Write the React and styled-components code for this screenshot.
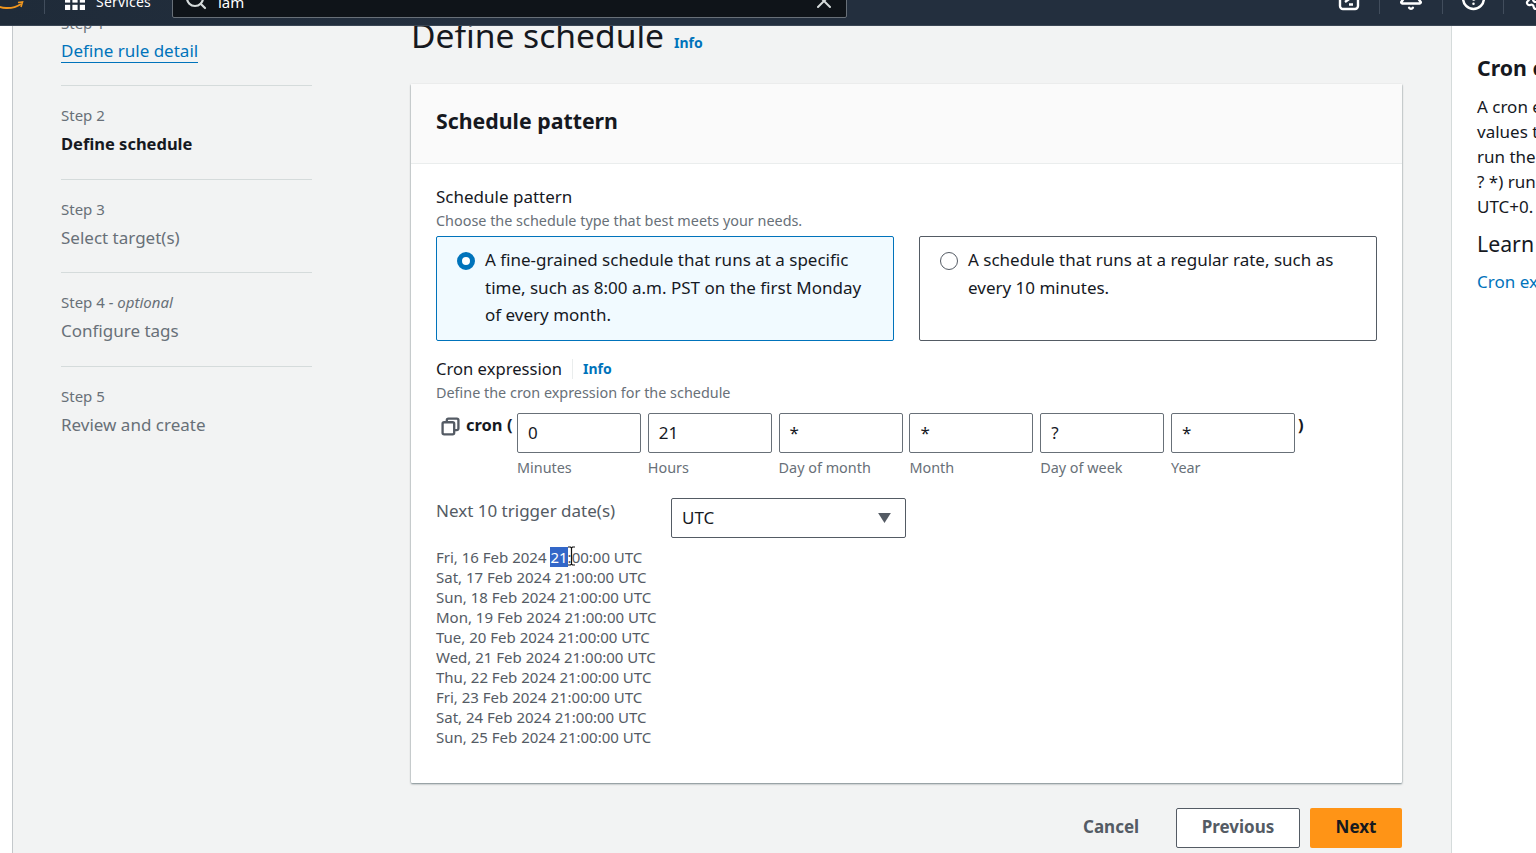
import React from "react";
import styled, { createGlobalStyle } from "styled-components";
import { Search, X, Bell, CircleHelp, Settings } from "lucide-react";

const GlobalStyle = createGlobalStyle`
  html, body {
    margin: 0;
    padding: 0;
    overflow: hidden;
    background: #fff;
    font-family: "Noto Sans", "Open Sans", sans-serif;
  }
`;

const fields = [
  { value: "0", label: "Minutes" },
  { value: "21", label: "Hours" },
  { value: "*", label: "Day of month" },
  { value: "*", label: "Month" },
  { value: "?", label: "Day of week" },
  { value: "*", label: "Year" },
];

const dates = [
  "Sat, 17 Feb 2024 21:00:00 UTC",
  "Sun, 18 Feb 2024 21:00:00 UTC",
  "Mon, 19 Feb 2024 21:00:00 UTC",
  "Tue, 20 Feb 2024 21:00:00 UTC",
  "Wed, 21 Feb 2024 21:00:00 UTC",
  "Thu, 22 Feb 2024 21:00:00 UTC",
  "Fri, 23 Feb 2024 21:00:00 UTC",
  "Sat, 24 Feb 2024 21:00:00 UTC",
  "Sun, 25 Feb 2024 21:00:00 UTC",
];

const steps = [
  { step: "Step 2", title: "Define schedule", active: true },
  { step: "Step 3", title: "Select target(s)" },
  { step: "Step 4", optional: true, title: "Configure tags" },
  { step: "Step 5", title: "Review and create" },
];

const App = () => {
  return (
    <Page>
      <GlobalStyle />
      <TopNav>
        <Logo viewBox="0 0 24 12">
          <path d="M-8 3c8 6 20 7 29 1" fill="none" stroke="#f0961e" strokeWidth="2" />
          <path d="M18 2.500l4.500-.5-1.500 5" fill="none" stroke="#f0961e" strokeWidth="1.600" />
        </Logo>
        <NavDivider />
        <ServicesButton>
          <GridIcon viewBox="0 0 20 20">
            {[0, 7.4, 14.8].map((x) =>
              [0, 7.4, 14.8].map((y) => (
                <rect key={`${x}-${y}`} x={x} y={y} width="5.200" height="5.200" fill="#fff" />
              ))
            )}
          </GridIcon>
          Services
        </ServicesButton>
        <SearchBox>
          <Search size={24} color="#d5dbdb" strokeWidth={2.2} />
          <SearchText>iam</SearchText>
          <ClearIcon>
            <X size={24} color="#d5dbdb" strokeWidth={2} />
          </ClearIcon>
        </SearchBox>
        <NavIcons>
          <NavIconSlot $width={61} $first>
            <svg width="22" height="24" viewBox="0 0 22 24" fill="none" stroke="#fff" strokeWidth="2.400">
              <rect x="2" y="2" width="18" height="20" rx="3" />
              <path d="M7 15l7-5M11 17.500h4" />
            </svg>
          </NavIconSlot>
          <NavIconSlot $width={63}>
            <Bell size={26} color="#fff" strokeWidth={2.3} />
          </NavIconSlot>
          <NavIconSlot $width={61}>
            <CircleHelp size={25} color="#fff" strokeWidth={2.4} />
          </NavIconSlot>
          <NavIconSlot $width={33} $last>
            <Settings size={24} color="#fff" strokeWidth={2.2} />
          </NavIconSlot>
        </NavIcons>
      </TopNav>

      <Body>
        <LeftRail />
        <Sidebar>
          <FirstStep>
            <StepLabel>Step 1</StepLabel>
            <StepLink>Define rule detail</StepLink>
          </FirstStep>
          {steps.map((s) => (
            <StepItem key={s.step}>
              <StepLabel>
                {s.step}
                {s.optional && <em> - optional</em>}
              </StepLabel>
              <StepTitle $active={s.active}>{s.title}</StepTitle>
            </StepItem>
          ))}
        </Sidebar>

        <Main>
          <PageHeading>
            <h1>Define schedule</h1>
            <InfoLink>Info</InfoLink>
          </PageHeading>

          <Panel>
            <PanelHeader>Schedule pattern</PanelHeader>
            <PanelBody>
              <FieldLabel>Schedule pattern</FieldLabel>
              <FieldHint>Choose the schedule type that best meets your needs.</FieldHint>
              <RadioRow>
                <RadioCard $checked>
                  <RadioDot $checked />
                  <span>
                    A fine-grained schedule that runs at a specific time, such as 8:00 a.m. PST on
                    the first Monday of every month.
                  </span>
                </RadioCard>
                <RadioCard>
                  <RadioDot />
                  <span>A schedule that runs at a regular rate, such as every 10 minutes.</span>
                </RadioCard>
              </RadioRow>

              <CronLabelRow>
                <CronLabel>Cron expression</CronLabel>
                <CronInfo>Info</CronInfo>
              </CronLabelRow>
              <FieldHint>Define the cron expression for the schedule</FieldHint>

              <CronRow>
                <CopyIcon viewBox="0 0 18 18" fill="none" stroke="#545b64" strokeWidth="2.200">
                  <rect x="1.500" y="5" width="11" height="11.500" rx="1.500" />
                  <path d="M5.500 5V3a1.500 1.500 0 0 1 1.500-1.500h8A1.500 1.500 0 0 1 16.500 3v8a1.500 1.500 0 0 1-1.500 1.500h-2.500" />
                </CopyIcon>
                <CronWord>cron (</CronWord>
                <CronFields>
                  {fields.map((f) => (
                    <CronField key={f.label}>
                      <CronInput>{f.value}</CronInput>
                      <CronCaption>{f.label}</CronCaption>
                    </CronField>
                  ))}
                </CronFields>
                <CronClose>)</CronClose>
              </CronRow>

              <TriggerRow>
                <TriggerLabel>Next 10 trigger date(s)</TriggerLabel>
                <ZoneSelect>
                  UTC
                  <Caret viewBox="0 0 14 11">
                    <path d="M0 0h14L7 11z" fill="#545b64" />
                  </Caret>
                </ZoneSelect>
              </TriggerRow>

              <DateList>
                <div>
                  Fri, 16 Feb 2024 <Selected>21</Selected>
                  <CursorAnchor>
                    :
                    <TextCursor viewBox="0 0 9 20" fill="none" stroke="#111" strokeWidth="1.200">
                      <path d="M1 1h2.500l1 1 1-1H8M1 19h2.500l1-1 1 1H8M4.500 2v16" />
                    </TextCursor>
                  </CursorAnchor>
                  00:00 UTC
                </div>
                {dates.map((d) => (
                  <div key={d}>{d}</div>
                ))}
              </DateList>
            </PanelBody>
          </Panel>

          <Actions>
            <CancelButton>Cancel</CancelButton>
            <PreviousButton>Previous</PreviousButton>
            <NextButton>Next</NextButton>
          </Actions>
        </Main>

        <HelpPanel>
          <HelpHeading>Cron expressions</HelpHeading>
          <HelpText>
            <div>A cron expression</div>
            <div>values that</div>
            <div>run the</div>
            <div>? *) runs</div>
            <div>UTC+0.</div>
          </HelpText>
          <HelpSubheading>Learn more</HelpSubheading>
          <HelpLink>Cron expressions</HelpLink>
        </HelpPanel>
      </Body>
    </Page>
  );
};

const Page = styled.div`
  width: 1536px;
  height: 853px;
  overflow: hidden;
  display: flex;
  flex-direction: column;
  background: #fff;
`;

const TopNav = styled.header`
  position: relative;
  z-index: 2;
  flex: 0 0 26px;
  height: 26px;
  display: flex;
  align-items: flex-end;
  background: linear-gradient(90deg, #1f2b39, #232f3e 30%);
  border-bottom: 1px solid #3a4654;
  box-sizing: border-box;
  overflow: hidden;
  color: #fff;
`;

const Logo = styled.svg`
  width: 24px;
  height: 12px;
  margin-bottom: 13px;
  flex: none;
`;

const NavDivider = styled.div`
  width: 1px;
  height: 14px;
  margin-left: 20px;
  margin-bottom: 11px;
  background: #414d5c;
`;

const ServicesButton = styled.div`
  display: flex;
  align-items: flex-end;
  gap: 11px;
  width: 107px;
  margin-left: 20px;
  padding-bottom: 13px;
  font-size: 14px;
  line-height: 20px;
  letter-spacing: 0.2px;
`;

const GridIcon = styled.svg`
  width: 20px;
  height: 20px;
  margin-bottom: 2px;
  flex: none;
`;

const SearchBox = styled.div`
  width: 675px;
  height: 30px;
  margin-bottom: 7px;
  box-sizing: border-box;
  display: flex;
  align-items: center;
  padding: 0 10px 8px 11px;
  background: #0f1419;
  border: 1px solid #687078;
  border-radius: 2px;
`;

const SearchText = styled.span`
  margin: 6px 0 0 10px;
  font-size: 15px;
  flex: 1;
`;

const ClearIcon = styled.span`
  display: flex;
  margin-top: 4px;
`;

const NavIcons = styled.div`
  margin-left: auto;
  display: flex;
  align-items: flex-end;
  margin-bottom: 11px;
`;

const NavIconSlot = styled.div`
  width: ${(p) => p.$width}px;
  height: 14px;
  display: flex;
  justify-content: ${(p) => (p.$last ? "flex-start" : "center")};
  align-items: flex-end;
  padding-bottom: 3px;
  padding-left: ${(p) => (p.$last ? "20px" : "0")};
  box-sizing: border-box;
  border-left: ${(p) => (p.$first ? "0" : "1px solid #414d5c")};
  svg {
    flex: none;
  }
`;

const Body = styled.div`
  flex: 1;
  min-height: 0;
  display: flex;
  background: #f2f3f3;
  color: #16191f;
`;

const LeftRail = styled.div`
  flex: 0 0 13px;
  background: #fff;
  border-right: 1px solid #c4c8cb;
  box-sizing: border-box;
`;

const Sidebar = styled.nav`
  flex: 0 0 251px;
  margin-left: 48px;
  margin-top: -13px;
`;

const FirstStep = styled.div`
  height: 72px;
  border-bottom: 1px solid #d5dbdb;
`;

const StepItem = styled.div`
  height: 93.6px;
  padding-top: 19px;
  box-sizing: border-box;
  border-bottom: 1px solid #d5dbdb;
  &:last-child {
    border-bottom: 0;
  }
`;

const StepLabel = styled.div`
  font-size: 15px;
  line-height: 20px;
  color: #687078;
  em {
    font-size: 15px;
  }
`;

const StepLink = styled.a`
  display: inline-block;
  margin-top: 7px;
  font-size: 17px;
  line-height: 22px;
  color: #0073bb;
  border-bottom: 1px solid #0073bb;
`;

const StepTitle = styled.div`
  margin-top: 8px;
  font-size: ${(p) => (p.$active ? "16.5px" : "17px")};
  line-height: 22px;
  color: ${(p) => (p.$active ? "#16191f" : "#687078")};
  font-weight: ${(p) => (p.$active ? 700 : 400)};
`;

const Main = styled.main`
  flex: 0 0 991px;
  margin-left: 99px;
  margin-top: -26px;
`;

const PageHeading = styled.div`
  height: 84px;
  display: flex;
  align-items: baseline;
  gap: 10px;
  h1 {
    margin: 0;
    font-size: 33.6px;
    line-height: 70px;
    font-weight: 400;
  }
`;

const InfoLink = styled.a`
  font-size: 14px;
  font-weight: 700;
  color: #0073bb;
`;

const Panel = styled.section`
  background: #fff;
  height: 699px;
  box-shadow: 0 1px 2px rgba(0, 28, 36, 0.5), 1px 0 1px -1px rgba(0, 28, 36, 0.3),
    -1px 0 1px -1px rgba(0, 28, 36, 0.3);
  border-radius: 1px;
`;

const PanelHeader = styled.h2`
  margin: 0;
  height: 80px;
  box-sizing: border-box;
  padding: 0 25px 6px;
  display: flex;
  align-items: center;
  background: #fafafa;
  border-bottom: 1px solid #eaeded;
  font-size: 21.3px;
  font-weight: 700;
`;

const PanelBody = styled.div`
  padding: 22px 25px 0;
`;

const FieldLabel = styled.div`
  font-size: 17px;
  line-height: 22px;
  color: #16191f;
`;

const FieldHint = styled.div`
  margin-top: 3px;
  font-size: 14.4px;
  line-height: 20px;
  color: #687078;
`;

const RadioRow = styled.div`
  display: flex;
  gap: 25px;
  margin-top: 5px;
`;

const RadioCard = styled.div`
  flex: 0 0 458px;
  height: 105px;
  box-sizing: border-box;
  display: flex;
  gap: 10px;
  padding: 9px 20px;
  border: 1px solid ${(p) => (p.$checked ? "#0073bb" : "#545b64")};
  background: ${(p) => (p.$checked ? "#f1faff" : "#fff")};
  border-radius: 2px;
  font-size: 17px;
  line-height: 27.7px;
`;

const RadioDot = styled.span`
  flex: none;
  width: 18px;
  height: 18px;
  margin-top: 6px;
  box-sizing: border-box;
  border-radius: 50%;
  background: #fff;
  border: ${(p) => (p.$checked ? "5px solid #0073bb" : "1.5px solid #545b64")};
`;

const CronLabelRow = styled.div`
  display: flex;
  align-items: center;
  gap: 10px;
  margin-top: 17px;
`;

const CronLabel = styled(FieldLabel)`
  font-size: 16.6px;
`;

const CronInfo = styled(InfoLink)`
  padding-left: 10px;
  border-left: 1px solid #eaeded;
  line-height: 20px;
`;

const CronRow = styled.div`
  display: flex;
  align-items: flex-start;
  margin-top: 10px;
`;

const CopyIcon = styled.svg`
  width: 19px;
  height: 19px;
  margin: 4px 0 0 5px;
  flex: none;
`;

const CronWord = styled.div`
  margin-left: 6px;
  width: 51px;
  font-size: 16.5px;
  line-height: 24px;
  font-weight: 700;
`;

const CronFields = styled.div`
  display: flex;
  gap: 6.8px;
`;

const CronField = styled.div`
  width: 124px;
`;

const CronInput = styled.div`
  height: 40px;
  box-sizing: border-box;
  padding: 0 10px 2px;
  display: flex;
  align-items: center;
  border: 1px solid #687078;
  border-radius: 2px;
  background: #fff;
  font-size: 17px;
`;

const CronCaption = styled.div`
  margin-top: 5px;
  font-size: 14.4px;
  line-height: 20px;
  color: #687078;
`;

const CronClose = styled.div`
  font-size: 16.5px;
  line-height: 24px;
  font-weight: 700;
  margin-left: 3px;
`;

const TriggerRow = styled.div`
  display: flex;
  margin-top: 20px;
`;

const TriggerLabel = styled.div`
  width: 235px;
  font-size: 17px;
  line-height: 26px;
  color: #545b64;
`;

const ZoneSelect = styled.div`
  width: 235px;
  height: 40px;
  box-sizing: border-box;
  padding: 0 14px 2px 10px;
  display: flex;
  align-items: center;
  justify-content: space-between;
  border: 1px solid #545b64;
  border-radius: 2px;
  font-size: 17px;
`;

const Caret = styled.svg`
  width: 13px;
  height: 10px;
  margin-top: 2px;
`;

const DateList = styled.div`
  margin-top: 9px;
  font-size: 15px;
  line-height: 20px;
  color: #545b64;
`;

const Selected = styled.span`
  background: #3367c8;
  color: #fff;
`;

const CursorAnchor = styled.span`
  position: relative;
`;

const TextCursor = styled.svg`
  position: absolute;
  left: -1px;
  top: -1px;
  width: 9px;
  height: 20px;
`;

const Actions = styled.div`
  display: flex;
  align-items: center;
  justify-content: flex-end;
  margin-top: 25px;
`;

const ButtonBase = styled.button`
  height: 40px;
  box-sizing: border-box;
  font-family: inherit;
  font-size: 17px;
  font-weight: 700;
  border-radius: 2px;
  padding: 0 0 4px;
`;

const CancelButton = styled(ButtonBase)`
  width: 56px;
  margin-right: 37px;
  border: 0;
  background: none;
  color: #545b64;
`;

const PreviousButton = styled(ButtonBase)`
  width: 124px;
  margin-right: 10px;
  border: 1px solid #545b64;
  background: #fff;
  color: #545b64;
`;

const NextButton = styled(ButtonBase)`
  width: 92px;
  border: 0;
  background: #ff9416;
  color: #16191f;
`;

const HelpPanel = styled.aside`
  flex: 1;
  min-width: 0;
  margin-left: 49px;
  padding: 28px 0 0 25px;
  background: #fff;
  border-left: 1px solid #d5dbdb;
  overflow: hidden;
  white-space: nowrap;
`;

const HelpHeading = styled.div`
  font-size: 21.3px;
  line-height: 28px;
  font-weight: 700;
`;

const HelpText = styled.div`
  margin-top: 12px;
  font-size: 17px;
  line-height: 25px;
`;

const HelpSubheading = styled.div`
  margin-top: 11px;
  font-size: 21.3px;
  line-height: 28px;
`;

const HelpLink = styled.a`
  display: block;
  margin-top: 13px;
  font-size: 17px;
  line-height: 22px;
  color: #0073bb;
`;

export default App;
